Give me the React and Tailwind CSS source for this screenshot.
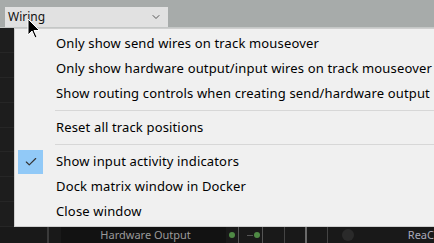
import { Check, ChevronDown } from 'lucide-react';

const groups = [
  [
    { label: 'Only show send wires on track mouseover' },
    { label: 'Only show hardware output/input wires on track mouseover' },
    { label: 'Show routing controls when creating send/hardware output' },
  ],
  [{ label: 'Reset all track positions' }],
  [
    { label: 'Show input activity indicators', checked: true },
    { label: 'Dock matrix window in Docker' },
    { label: 'Close window' },
  ],
];

function MenuItem({ label, checked }) {
  return (
    <div className="flex h-[25px] items-center">
      <div className="flex w-[41px] pl-[3px]">
        {checked && (
          <div className="flex h-[24px] w-[25px] items-center justify-center bg-[#91c9f7]">
            <Check size={14} strokeWidth={2} className="text-[#333]" />
          </div>
        )}
      </div>
      <span className="whitespace-nowrap tracking-[0.15px]">{label}</span>
    </div>
  );
}

function Cursor() {
  return (
    <svg className="absolute left-[27px] top-[18px]" width="14" height="22" viewBox="0 0 14 22">
      <path
        d="M1 1 L1 17 L5 13 L8 20 L10 19 L7 12.5 L12.5 12.5 Z"
        fill="#000"
        stroke="#fff"
        strokeWidth="1"
        strokeLinejoin="miter"
      />
    </svg>
  );
}

export default function App() {
  return (
    <div
      className="relative h-[243px] w-[434px] overflow-hidden bg-[#1d1d1d]"
      style={{ fontFamily: '"Noto Sans", "Open Sans", sans-serif' }}
    >
      {/* toolbar */}
      <div className="flex h-[28px] items-start border-b border-[#c4c7c6] bg-[#a7abaa] pl-[5px] pt-[7px]">
        <div className="flex h-[20px] w-[163px] items-center justify-between bg-[#e1e1e1] pl-[3px] pr-[6px] text-[12px] text-[#111]">
          <span>Wiring</span>
          <ChevronDown size={12} strokeWidth={2} className="text-[#555]" />
        </div>
      </div>

      {/* matrix background */}
      <div className="flex h-[199px] flex-col">
        {[0, 1, 2, 3, 4, 5, 6, 7].map((i) => (
          <div key={i} className="h-[25px] border-b border-[#262626]" />
        ))}
      </div>
      <div className="absolute bottom-0 left-0 flex h-[16px] w-full items-center bg-[#191919] text-[11px] text-[#9a9a9a]">
        <div className="h-full w-[51px] border-r-2 border-[#3a3a3a]" />
        <div className="ml-[12px] flex h-full w-[170px] items-center justify-center bg-[#121212] pl-[4px]">
          Hardware Output
        </div>
        <div className="relative flex h-full items-center">
          <span className="ml-[3px] h-[6px] w-[6px] rounded-full bg-[#4f8a45]" />
          <span className="ml-[3px] h-full w-px bg-[#555]" />
          <span className="ml-[8px] h-px w-[6px] bg-[#555]" />
          <span className="ml-[1px] h-[6px] w-[6px] rounded-full bg-[#4f8a45]" />
          <span className="ml-[2px] h-full w-px bg-[#555]" />
          <span className="ml-[21px] h-full w-px bg-[#444]" />
          <span className="ml-[20px] h-full w-[2px] bg-[#6a6a6a]" />
          <span className="ml-[20px] h-full w-px bg-[#444]" />
          <span className="ml-[14px] h-[12px] w-[12px] rounded-full bg-[#2a2a2a]" />
          <span className="ml-[54px] text-[#aab]">ReaC</span>
        </div>
      </div>

      {/* context menu */}
      <div className="absolute left-[14px] top-[28px] h-[199px] w-[440px] border border-[#cfcfcf] bg-[#f0f0f0] py-[2px] text-[13px] text-black">
        {groups.map((group, gi) => (
          <div key={gi}>
            {gi > 0 && (
              <div className="flex h-[9px] items-center pl-[40px]">
                <div className="h-px flex-1 bg-[#d7d7d7]" />
              </div>
            )}
            {group.map((item) => (
              <MenuItem key={item.label} {...item} />
            ))}
          </div>
        ))}
      </div>

      <Cursor />
    </div>
  );
}
